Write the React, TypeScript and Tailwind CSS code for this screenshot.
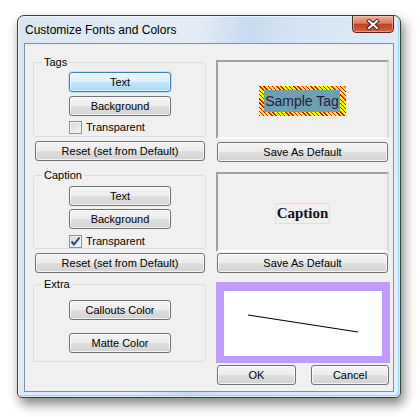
import type { ReactNode } from "react";

const FONT = { fontFamily: '"Liberation Sans", Arial, sans-serif' };

function Btn({ children, className = "", focused = false }: { children: ReactNode; className?: string; focused?: boolean }) {
  return (
    <div
      className={`flex h-[20px] items-center justify-center rounded-[3px] border text-[11px] leading-none text-black ${
        focused
          ? "border-[#3c7fb1] bg-[linear-gradient(180deg,#eaf6fd_0%,#d9f0fc_50%,#bee6fd_51%,#a7d9f5_100%)] shadow-[0_0_0_1px_#b5e6fb,inset_0_0_0_1px_rgba(255,255,255,0.7)]"
          : "border-[#707070] bg-[linear-gradient(180deg,#f4f4f4_0%,#ececec_50%,#dfdfdf_51%,#d2d2d2_100%)] shadow-[inset_0_0_0_1px_rgba(255,255,255,0.75)]"
      } ${className}`}
    >
      {children}
    </div>
  );
}

function Check({ checked, label }: { checked?: boolean; label: string }) {
  return (
    <div className="flex h-[13px] items-center gap-[4px] text-[11px] text-black">
      <div className="flex h-[13px] w-[13px] items-center justify-center border border-[#8f8f8f] bg-[linear-gradient(135deg,#d6d6d6_0%,#f4f4f4_100%)] shadow-[inset_0_0_0_1px_#f4f4f4]">
        {checked && (
          <svg width="11" height="11" viewBox="0 0 11 11">
            <path d="M1.5 5.5 L4 8.5 L9.5 1.5" fill="none" stroke="#2a3f8f" strokeWidth="2" />
          </svg>
        )}
      </div>
      <span>{label}</span>
    </div>
  );
}

function Group({ label, className = "", children }: { label: string; className?: string; children: ReactNode }) {
  return (
    <div className={`relative flex flex-col rounded-[3px] border border-[#d5dfe5] ${className}`}>
      <span className="absolute left-[8px] top-[-7px] bg-[#f0f0f0] px-[2px] text-[11px] leading-[13px] text-black">{label}</span>
      {children}
    </div>
  );
}

function Preview({ className = "", children }: { className?: string; children: ReactNode }) {
  return (
    <div className={`flex items-center justify-center border-2 border-t-[#a0a0a0] border-l-[#a0a0a0] border-r-[#dcdcdc] border-b-[#fdfdfd] ${className}`}>
      {children}
    </div>
  );
}

export default function App() {
  return (
    <div className="h-[417px] w-[420px] bg-white pl-[17px] pt-[15px]" style={FONT}>
      <div className="relative flex h-[383px] w-[384px] flex-col rounded-t-[7px] rounded-b-[5px] border border-[#3d3d3d] bg-[linear-gradient(100deg,#d9e6f2_0%,#e4edf6_40%,#c6dbef_52%,#d3e4f4_62%,#e6eff8_100%)] px-[6px] pb-[5px] shadow-[3px_6px_12px_rgba(0,0,0,0.5),inset_0_0_0_1px_rgba(255,255,255,0.6),inset_-2px_-2px_0_#8fd8f5]">
        <div className="flex h-[27px] items-center pl-[1px] text-[12px] text-black">Customize Fonts and Colors</div>
        <div className="absolute right-[6px] top-[-1px] flex h-[18px] w-[42px] items-center justify-center rounded-b-[4px] border border-[#5e2217] bg-[linear-gradient(180deg,#eab0a2_0%,#da7a64_45%,#c2401f_52%,#d2603f_100%)] shadow-[inset_0_0_0_1px_rgba(255,210,200,0.5)]">
          <svg width="14" height="11" viewBox="0 0 14 11">
            <path d="M3 2 L11 9 M11 2 L3 9" stroke="#4a1a12" strokeWidth="4" strokeLinecap="square" />
            <path d="M3 2 L11 9 M11 2 L3 9" stroke="#ffffff" strokeWidth="2.2" strokeLinecap="square" />
          </svg>
        </div>

        <div className="flex flex-1 flex-col border border-[#7e90a4] bg-[#f0f0f0] pl-[8px] pt-[16px]">
          {/* Tags */}
          <div className="flex items-start gap-[10px]">
            <div className="mt-[2px] flex w-[173px] flex-col">
              <Group label="Tags" className="h-[75px] pt-[9px]">
                <Btn focused className="ml-[35px] w-[102px]">Text</Btn>
                <Btn className="ml-[35px] mt-[4px] w-[102px]">Background</Btn>
                <div className="ml-[35px] mt-[5px]">
                  <Check label="Transparent" />
                </div>
              </Group>
              <Btn className="ml-[2px] mt-[4px] w-[170px]">Reset (set from Default)</Btn>
            </div>
            <div className="flex w-[173px] flex-col">
              <Preview className="h-[79px]">
                <div className="mt-[2px] bg-[repeating-linear-gradient(45deg,#ff0000_0px,#ff0000_1px,#ffff00_1px,#ffff00_3px)] py-[4px] pl-[5px] pr-[6px]">
                  <div className="bg-[#70a0b0] px-[1px] text-[14px] leading-[22px] text-[#1c2040]">Sample Tag</div>
                </div>
              </Preview>
              <Btn className="ml-[1px] mt-[3px] w-[171px]">Save As Default</Btn>
            </div>
          </div>

          {/* Caption */}
          <div className="mt-[10px] flex items-start gap-[10px]">
            <div className="mt-[3px] flex w-[173px] flex-col">
              <Group label="Caption" className="h-[74px] pt-[10px]">
                <Btn className="ml-[35px] w-[102px]">Text</Btn>
                <Btn className="ml-[35px] mt-[3px] w-[102px]">Background</Btn>
                <div className="ml-[35px] mt-[6px]">
                  <Check checked label="Transparent" />
                </div>
              </Group>
              <Btn className="ml-[2px] mt-[4px] w-[170px]">Reset (set from Default)</Btn>
            </div>
            <div className="flex w-[173px] flex-col">
              <Preview className="h-[80px]">
                <div className="mt-[3px] border border-[#c8f0c8] px-[1px] text-[15px] font-bold leading-[19px] text-[#10101a]" style={{ fontFamily: '"Liberation Serif", "Times New Roman", serif' }}>
                  Caption
                </div>
              </Preview>
              <Btn className="ml-[1px] mt-[1px] w-[171px]">Save As Default</Btn>
            </div>
          </div>

          {/* Extra */}
          <div className="mt-[9px] flex items-start gap-[10px]">
            <div className="mt-[2px] flex w-[173px] flex-col">
              <Group label="Extra" className="h-[78px] pt-[15px]">
                <Btn className="ml-[35px] w-[102px]">Callouts Color</Btn>
                <Btn className="ml-[35px] mt-[13px] w-[102px]">Matte Color</Btn>
              </Group>
            </div>
            <div className="flex w-[174px] flex-col">
              <div className="h-[81px] bg-[#c09cff] pb-[7px] pl-[8px] pr-[8px] pt-[9px]">
                <div className="h-full w-full bg-white">
                  <svg width="158" height="65" viewBox="0 0 158 65">
                    <line x1="24" y1="24" x2="134" y2="41" stroke="#000" strokeWidth="1.2" />
                  </svg>
                </div>
              </div>
              <div className="mt-[2px] flex">
                <Btn className="ml-[1px] w-[79px]">OK</Btn>
                <Btn className="ml-auto mr-[1px] w-[78px]">Cancel</Btn>
              </div>
            </div>
          </div>
        </div>
      </div>
    </div>
  );
}
